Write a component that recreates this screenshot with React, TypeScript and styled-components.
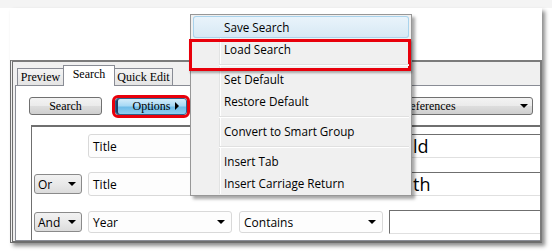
import styled, { createGlobalStyle } from "styled-components";

const ui = `"Open Sans", "Noto Sans", sans-serif`;
const serif = `"Liberation Serif", "Times New Roman", serif`;

const GlobalStyle = createGlobalStyle`
  html, body {
    margin: 0;
    padding: 0;
    background: #ffffff;
  }
  body {
    width: 552px;
    height: 252px;
    overflow: hidden;
  }
  * {
    box-sizing: border-box;
  }
`;

const Stage = styled.div`
  width: 552px;
  height: 252px;
  padding: 8px 0 0 10px;
  background: linear-gradient(#f4f4f4 0 8px, #ffffff 8px);
`;

const Shot = styled.div`
  position: relative;
  width: 532px;
  height: 235px;
  display: flex;
  flex-direction: column;
  background: #ffffff;
  box-shadow: 3px 3px 4px rgba(0, 0, 0, 0.45);
`;

const Blank = styled.div`
  flex: none;
  height: 52px;
`;

const Window = styled.div`
  flex: 1;
  min-height: 0;
  display: flex;
  flex-direction: column;
  background: #f0f0f0;
  border-top: 2px solid #7b7b7b;
  border-left: 3px double #6e6e6e;
  border-right: 2px solid #7b7b7b;
  border-bottom: 2px solid #6e6e6e;
  padding-left: 2px;
  overflow: hidden;
`;

const TabStrip = styled.div`
  flex: none;
  height: 23px;
  display: flex;
  align-items: flex-end;
  padding-left: 2px;
`;

const Tab = styled.div<{ $active?: boolean; $w: number }>`
  position: relative;
  width: ${(p) => p.$w}px;
  height: ${(p) => (p.$active ? 21 : 17)}px;
  margin-left: -1px;
  margin-bottom: ${(p) => (p.$active ? -1 : 0)}px;
  z-index: ${(p) => (p.$active ? 2 : 1)};
  display: flex;
  align-items: center;
  justify-content: center;
  padding-bottom: ${(p) => (p.$active ? 3 : 0)}px;
  border: 1px solid #898c95;
  border-bottom: none;
  background: ${(p) =>
    p.$active ? "#ffffff" : "linear-gradient(#f4f4f4, #e4e4e4)"};
  font: 12px ${serif};
  color: #000;
  &:first-child {
    margin-left: 0;
  }
`;

const Panel = styled.div`
  flex: 1;
  min-height: 0;
  width: 560px;
  display: flex;
  flex-direction: column;
  background: #ffffff;
  border: 1px solid #898c95;
  padding: 11px 0 0 13px;
`;

const Toolbar = styled.div`
  flex: none;
  height: 18px;
  display: flex;
  align-items: center;
`;

const PushButton = styled.div`
  width: 73px;
  height: 18px;
  display: flex;
  align-items: center;
  justify-content: center;
  border: 1px solid #707070;
  border-radius: 3px;
  background: linear-gradient(#f3f3f3, #ebebeb 48%, #dddddd 52%, #cfcfcf);
  font: 12px ${serif};
  color: #000;
`;

const MenuButton = styled.div`
  position: relative;
  width: 72px;
  height: 17px;
  margin-left: 13px;
  display: flex;
  align-items: center;
  padding: 0 7px 0 12px;
  border: 1px solid #2c628b;
  border-radius: 3px;
  background: linear-gradient(#d3ecfa, #a7d9f5 45%, #6fbce8 55%, #8fcdf0);
  box-shadow: inset 2px 0 0 #1d3f66;
  outline: 3px solid #e8000b;
  font: 12px ${serif};
  color: #000;
  span {
    flex: 1;
    text-align: center;
  }
`;

const RightArrow = styled.i`
  width: 0;
  height: 0;
  border-top: 4px solid transparent;
  border-bottom: 4px solid transparent;
  border-left: 4px solid #000;
`;

const Caret = styled.i`
  flex: none;
  width: 0;
  height: 0;
  border-left: 4px solid transparent;
  border-right: 4px solid transparent;
  border-top: 4px solid #000;
`;

const PrefSelect = styled.div`
  width: 173px;
  height: 18px;
  margin-left: 173px;
  display: flex;
  align-items: center;
  padding: 0 4px 0 3px;
  border: 1px solid #707070;
  border-radius: 3px;
  background: linear-gradient(#f3f3f3, #ebebeb 48%, #dddddd 52%, #cfcfcf);
  font: 12px ${serif};
  color: #000;
  span {
    flex: 1;
    white-space: nowrap;
  }
`;

const Criteria = styled.div`
  flex: 1;
  margin: 10px 0 0 2px;
  display: flex;
  flex-direction: column;
  gap: 14px;
  padding: 7px 0 0 2px;
  background: #ffffff;
  border-top: 2px solid #6f6f6f;
  border-left: 1px solid #6f6f6f;
`;

const Row = styled.div`
  height: 24px;
  display: flex;
  align-items: center;
  gap: 6px;
`;

const Conj = styled.div`
  flex: none;
  width: 48px;
  height: 20px;
  display: flex;
  align-items: center;
  padding: 0 5px 0 3px;
  border: 1px solid #8a8a8a;
  border-radius: 3px;
  background: linear-gradient(#f2f2f2, #e9e9e9 50%, #dcdcdc);
  font: 12px ${ui};
  color: #000;
  span {
    flex: 1;
  }
`;

const ConjSpace = styled.div`
  flex: none;
  width: 48px;
`;

const Combo = styled.div<{ $tall?: boolean; $gapLeft?: number }>`
  flex: none;
  width: 144px;
  height: ${(p) => (p.$tall ? 24 : 22)}px;
  margin-left: ${(p) => p.$gapLeft ?? 0}px;
  display: flex;
  align-items: center;
  padding: 0 6px 0 4px;
  border: 1px solid #d9d9d9;
  border-radius: 3px;
  background: #fdfdfd;
  font: 12px ${ui};
  color: #000;
  span {
    flex: 1;
  }
`;

const ValueBox = styled.div<{ $indent: number }>`
  flex: none;
  width: 200px;
  height: 24px;
  display: flex;
  align-items: center;
  padding-left: ${(p) => p.$indent}px;
  border-top: 1px solid #6f6f6f;
  border-left: 1px solid #6f6f6f;
  border-bottom: 1px solid #e0e0e0;
  border-right: 1px solid #e0e0e0;
  background: #ffffff;
  font: 18px ${ui};
  color: #000;
  white-space: nowrap;
`;

const Menu = styled.div`
  position: absolute;
  left: 180px;
  top: 6px;
  width: 222px;
  z-index: 10;
  padding: 1px 2px;
  background: #f0f0f0;
  border: 1px solid #979797;
  box-shadow: 3px 3px 3px rgba(0, 0, 0, 0.35);
  &::before {
    content: "";
    position: absolute;
    left: 28px;
    top: 1px;
    bottom: 1px;
    width: 1px;
    background: #e2e3e3;
    box-shadow: 1px 0 0 #ffffff;
  }
`;

const Item = styled.div<{ $hover?: boolean; $marked?: boolean }>`
  position: relative;
  height: 22px;
  display: flex;
  align-items: center;
  padding-left: 31px;
  border-radius: 3px;
  font: 11.7px ${ui};
  color: #000;
  background: ${(p) =>
    p.$hover ? "linear-gradient(#eaf4fb, #d6e8f4)" : "transparent"};
  box-shadow: ${(p) => (p.$hover ? "inset 0 0 0 1px #a9d3ec" : "none")};
  &::after {
    content: "";
    display: ${(p) => (p.$marked ? "block" : "none")};
    position: absolute;
    top: 1px;
    left: -4px;
    right: -2px;
    height: 26px;
    border: 3px solid #e8000b;
    box-shadow: 1px 2px 2px rgba(0, 0, 0, 0.3);
  }
`;

const Separator = styled.div`
  position: relative;
  height: 8px;
  &::after {
    content: "";
    position: absolute;
    left: 26px;
    right: 0;
    top: 4px;
    height: 1px;
    background: #e0e0e0;
    box-shadow: 0 1px 0 #ffffff;
  }
`;

export default function App() {
  return (
    <Stage>
      <GlobalStyle />
      <Shot>
        <Blank />
        <Window>
          <TabStrip>
            <Tab $w={47}>Preview</Tab>
            <Tab $w={52} $active>
              Search
            </Tab>
            <Tab $w={59}>Quick Edit</Tab>
          </TabStrip>
          <Panel>
            <Toolbar>
              <PushButton>Search</PushButton>
              <MenuButton>
                <span>Options</span>
                <RightArrow />
              </MenuButton>
              <PrefSelect>
                <span>Search Preferences</span>
                <Caret />
              </PrefSelect>
            </Toolbar>
            <Criteria>
              <Row>
                <ConjSpace />
                <Combo $tall>
                  <span>Title</span>
                  <Caret />
                </Combo>
                {/* covered by the open menu */}
                <Combo $gapLeft={1} />
                <ValueBox $indent={23}>ld</ValueBox>
              </Row>
              <Row>
                <Conj>
                  <span>Or</span>
                  <Caret />
                </Conj>
                <Combo $tall>
                  <span>Title</span>
                  <Caret />
                </Combo>
                <Combo $gapLeft={1} />
                <ValueBox $indent={23}>th</ValueBox>
              </Row>
              <Row>
                <Conj>
                  <span>And</span>
                  <Caret />
                </Conj>
                <Combo>
                  <span>Year</span>
                  <Caret />
                </Combo>
                <Combo $gapLeft={1}>
                  <span>Contains</span>
                  <Caret />
                </Combo>
                <ValueBox $indent={0} />
              </Row>
            </Criteria>
          </Panel>
        </Window>
        <Menu>
          <Item $hover>Save Search</Item>
          <Item $marked>Load Search</Item>
          <Separator />
          <Item>Set Default</Item>
          <Item>Restore Default</Item>
          <Separator />
          <Item>Convert to Smart Group</Item>
          <Separator />
          <Item>Insert Tab</Item>
          <Item>Insert Carriage Return</Item>
        </Menu>
      </Shot>
    </Stage>
  );
}
